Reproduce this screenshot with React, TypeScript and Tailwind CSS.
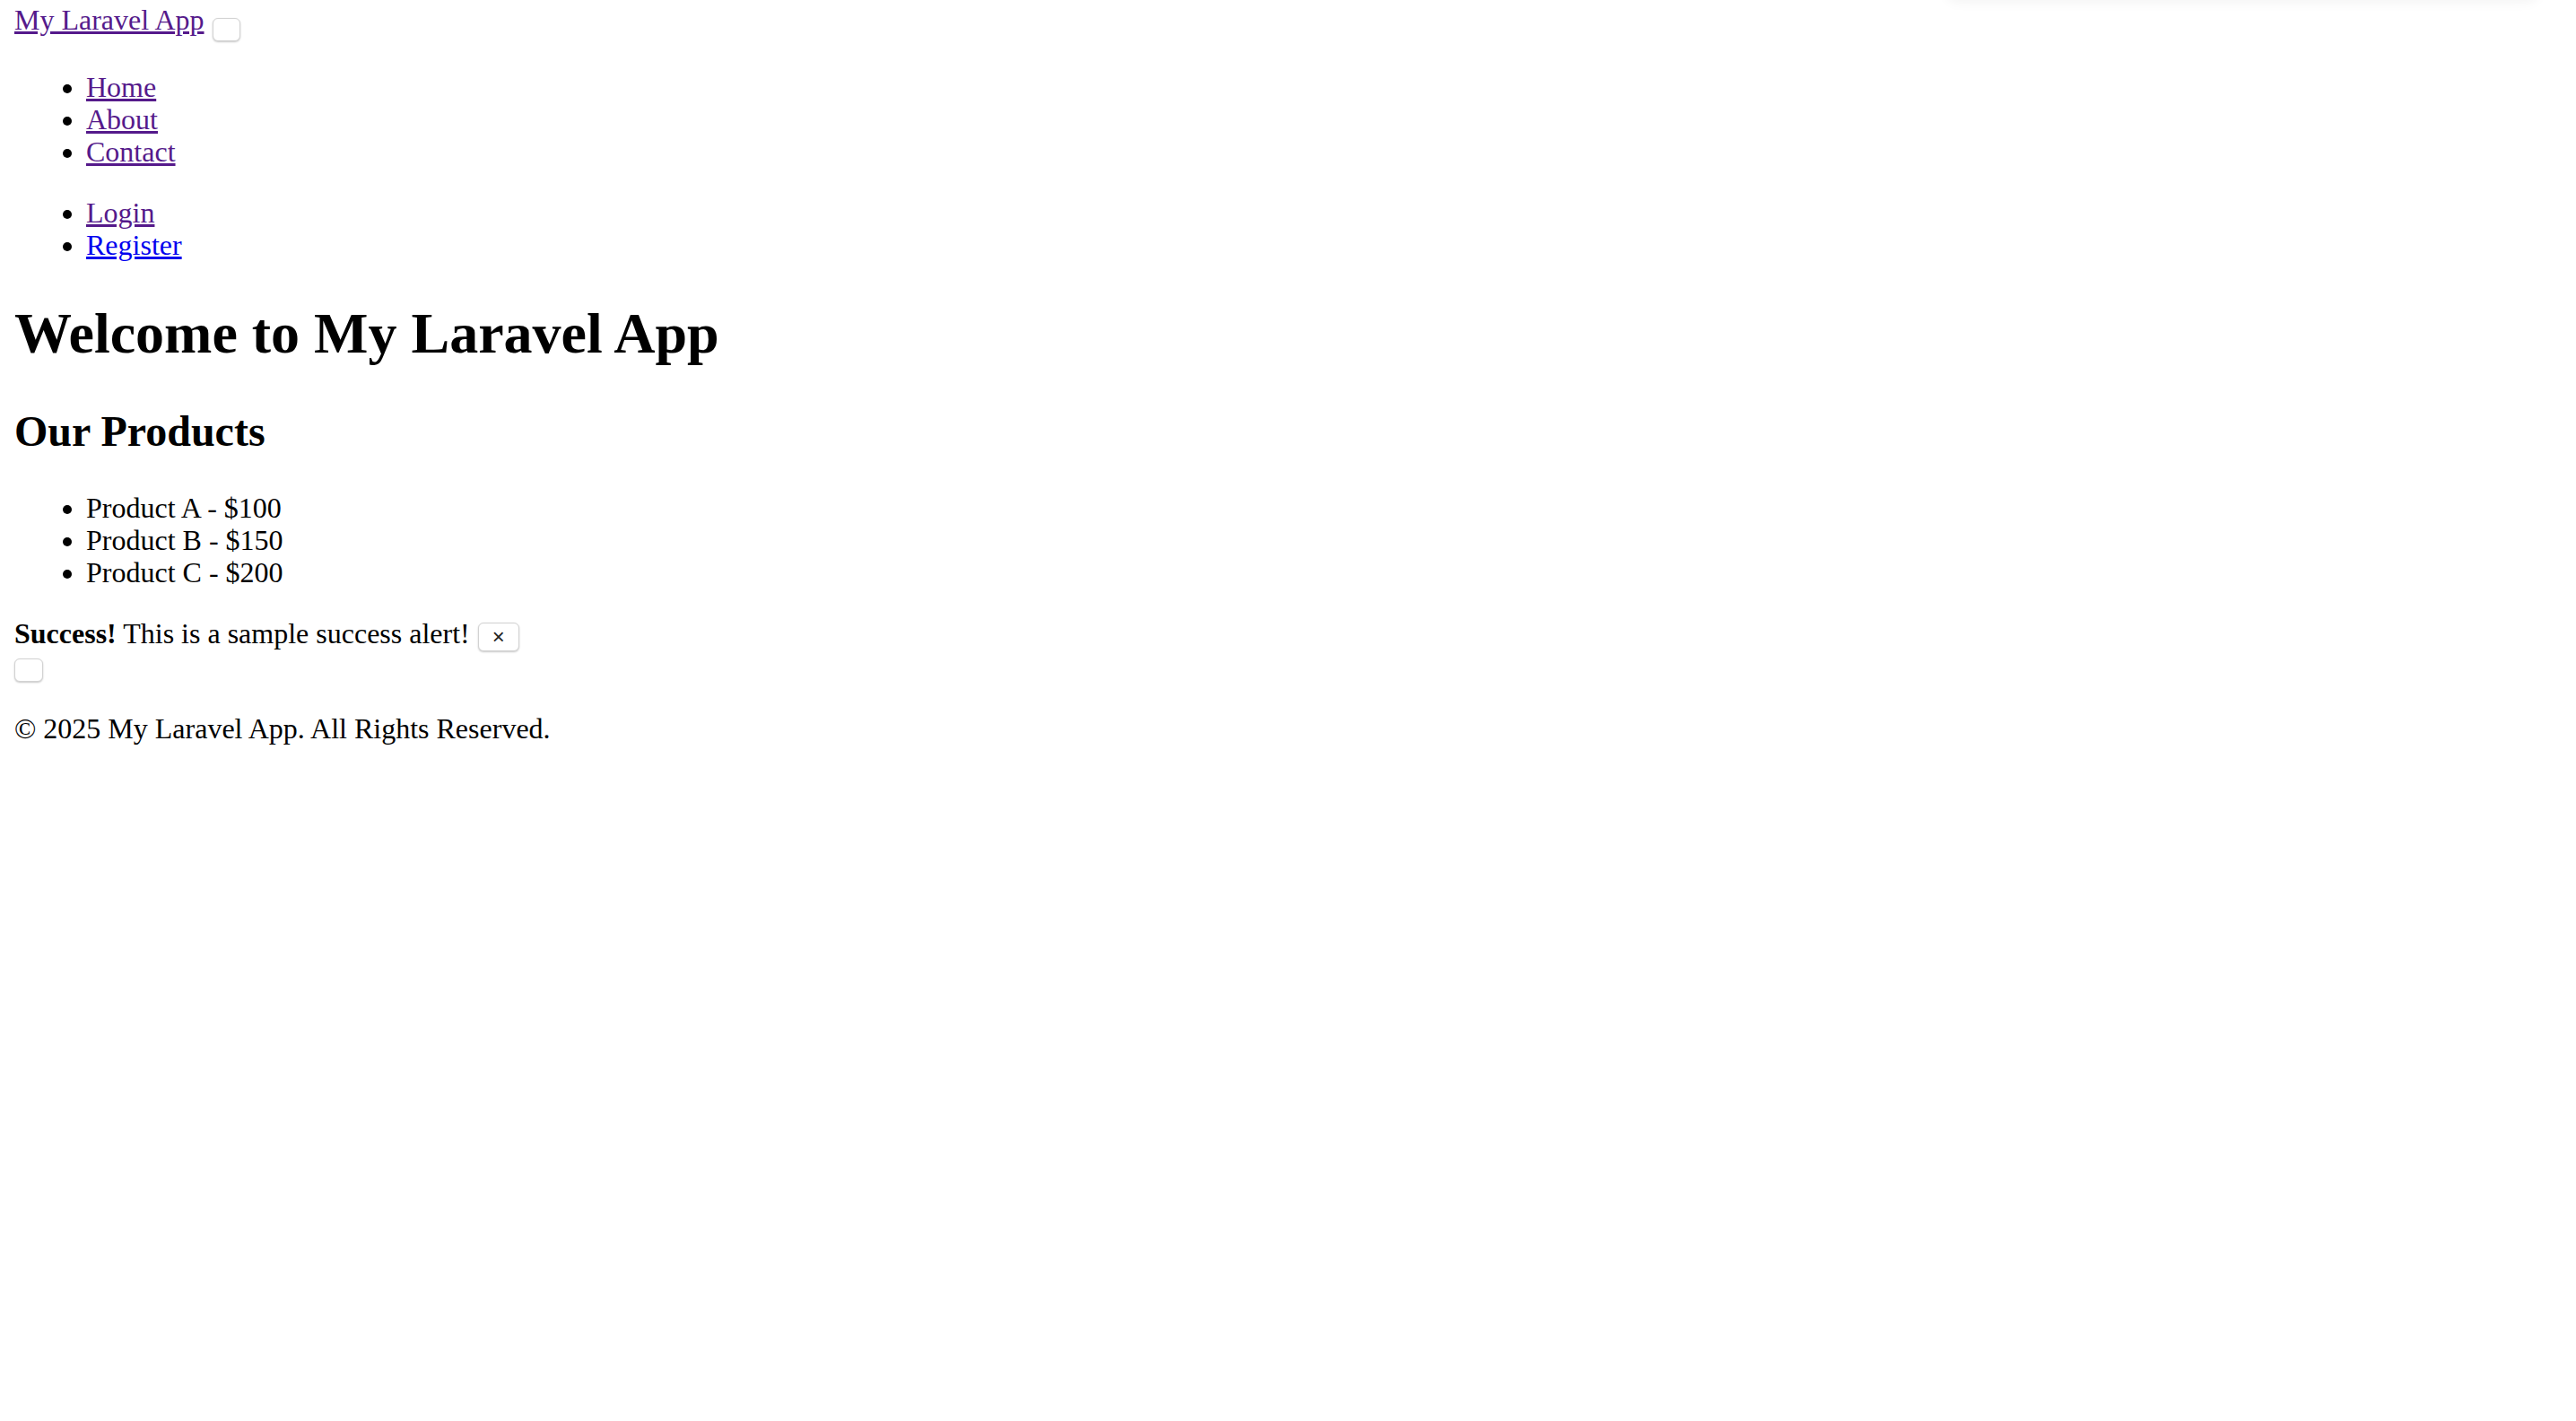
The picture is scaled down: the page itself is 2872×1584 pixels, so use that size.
import React from "react";

// plain, unstyled Laravel starter page (browser defaults, drawn at 2x)

const navLinks = ["Home", "About", "Contact"];
const products = [
  { name: "Product A", price: 100 },
  { name: "Product B", price: 150 },
  { name: "Product C", price: 200 },
];

function PlainButton({ className = "", children }: { className?: string; children?: React.ReactNode }) {
  return (
    <button
      type="button"
      className={`flex items-center justify-center rounded-[6px] border border-[#d2d2d2] bg-white shadow-[0_1px_2px_rgba(0,0,0,0.22)] ${className}`}
    >
      {children}
    </button>
  );
}

export default function App() {
  return (
    <div className="relative min-h-screen w-full overflow-hidden bg-white px-4 pt-[4px] font-['Liberation_Serif',serif] text-[32px] leading-[36px] text-black">
      {/* faint shadow of an off-screen menu */}
      <div className="absolute right-[42px] top-[-24px] h-[24px] w-[660px] rounded-b-[12px] bg-white shadow-[0_2px_14px_rgba(0,0,0,0.05)]" />

      {/* Navbar */}
      <nav>
        <div className="flex h-[43px] items-start">
          <a href="#" className="text-[#551A8B] underline">
            My Laravel App
          </a>
          <PlainButton className="ml-[9px] mt-4 h-[26px] w-[31px]" />
        </div>

        <ul className="mt-8 list-disc pl-[80px]">
          {navLinks.map((l) => (
            <li key={l}>
              <a href="#" className="text-[#551A8B] underline">
                {l}
              </a>
            </li>
          ))}
        </ul>

        <ul className="mt-8 list-disc pl-[80px]">
          <li>
            <a href="#" className="text-[#551A8B] underline">
              Login
            </a>
          </li>
          <li>
            <a href="#" className="text-[#0000EE] underline">
              Register
            </a>
          </li>
        </ul>
      </nav>

      {/* Content */}
      <main>
        <h1 className="mt-[45px] text-[64px] font-bold leading-[72px]">Welcome to My Laravel App</h1>
        <h2 className="mt-[46px] text-[48px] font-bold leading-[54px]">Our Products</h2>

        <ul className="mt-[40px] list-disc pl-[80px]">
          {products.map((p) => (
            <li key={p.name}>
              {p.name} - ${p.price}
            </li>
          ))}
        </ul>

        <div className="mt-[32px] flex h-[38px] items-start">
          <span>
            <strong className="font-bold">Success!</strong> This is a sample success alert!
          </span>
          <PlainButton className="ml-[9px] mt-[6px] h-[32px] w-[46px] font-['Liberation_Sans',sans-serif] text-[24px] leading-none text-[#222]">
            ×
          </PlainButton>
        </div>

        <PlainButton className="mt-[8px] h-[26px] w-[32px]" />
      </main>

      {/* Footer */}
      <footer className="mt-[34px]">
        <p>© 2025 My Laravel App. All Rights Reserved.</p>
      </footer>
    </div>
  );
}
